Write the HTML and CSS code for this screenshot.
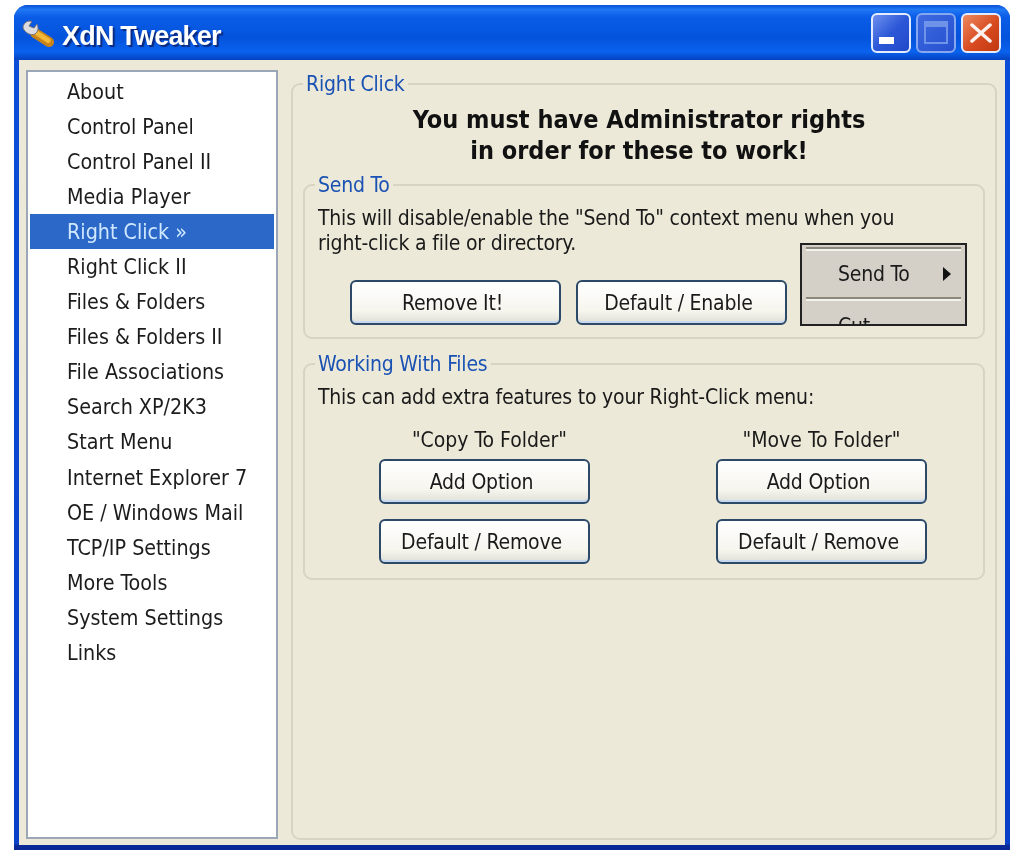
FILE: index.html
```html
<!DOCTYPE html>
<html lang="en">
<head>
<meta charset="utf-8">
<title>XdN Tweaker</title>
<link rel="stylesheet" href="styles.css">
</head>
<body>
<div class="window">
  <header class="titlebar">
    <svg class="app-icon" width="34" height="30" viewBox="0 0 34 30">
      <path d="M15 15 L29 24" stroke="#c88418" stroke-width="10" stroke-linecap="round"/>
      <path d="M16 14.5 L28 22.5" stroke="#f4b838" stroke-width="5" stroke-linecap="round"/>
      <path d="M3 10 C3 6 6 3 10 3 L12 3.500 L9 8 L14 10 L17 6 C19 10 18 14 15 16 C11 18 5 15 3 10Z" fill="#dcdce0" stroke="#70707a" stroke-width="1"/>
    </svg>
    <h1 class="title">XdN Tweaker</h1>
    <div class="controls">
      <div class="ctl ctl-min"><span class="min-bar"></span></div>
      <div class="ctl ctl-max"><span class="max-box"></span></div>
      <div class="ctl ctl-close">
        <svg width="22" height="20" viewBox="0 0 22 20"><path d="M2 2 L20 18 M20 2 L2 18" stroke="#fff" stroke-width="3.500" stroke-linecap="round" opacity=".92"/></svg>
      </div>
    </div>
  </header>
  <div class="client">
    <nav class="side">
      <a class="item">About</a>
      <a class="item">Control Panel</a>
      <a class="item">Control Panel II</a>
      <a class="item">Media Player</a>
      <a class="item active">Right Click »</a>
      <a class="item">Right Click II</a>
      <a class="item">Files &amp; Folders</a>
      <a class="item">Files &amp; Folders II</a>
      <a class="item">File Associations</a>
      <a class="item">Search XP/2K3</a>
      <a class="item">Start Menu</a>
      <a class="item">Internet Explorer 7</a>
      <a class="item">OE / Windows Mail</a>
      <a class="item">TCP/IP Settings</a>
      <a class="item">More Tools</a>
      <a class="item">System Settings</a>
      <a class="item">Links</a>
    </nav>
    <fieldset class="page">
      <legend class="legend">Right Click</legend>
      <p class="warning">You must have Administrator rights<br>in order for these to work!</p>
      <fieldset class="group group-send">
        <legend class="legend">Send To</legend>
        <p class="desc">This will disable/enable the "Send To" context menu when you<br>right-click a file or directory.</p>
        <div class="btn-row">
          <button class="btn">Remove It!</button>
          <button class="btn">Default / Enable</button>
        </div>
        <div class="menu-preview">
          <div class="menu-rule"></div>
          <div class="menu-row"><span>Send To</span><i class="arrow"></i></div>
          <div class="menu-rule"></div>
          <div class="menu-cut">Cut</div>
        </div>
      </fieldset>
      <fieldset class="group group-files">
        <legend class="legend">Working With Files</legend>
        <p class="desc">This can add extra features to your Right-Click menu:</p>
        <div class="cols">
          <div class="col">
            <div class="col-label">"Copy To Folder"</div>
            <button class="btn">Add Option</button>
            <button class="btn">Default / Remove</button>
          </div>
          <div class="col">
            <div class="col-label">"Move To Folder"</div>
            <button class="btn">Add Option</button>
            <button class="btn">Default / Remove</button>
          </div>
        </div>
      </fieldset>
    </fieldset>
  </div>
</div>
</body>
</html>
```
FILE: styles.css
```css
* { box-sizing: border-box; }
html, body { margin: 0; height: 100%; }
body {
  background: #fff;
  padding: 5px 10px 16px 14px;
  font-family: "DejaVu Sans Condensed", "DejaVu Sans", sans-serif;
  font-size: 21px;
  letter-spacing: -0.2px;
  color: #1a1a1a;
}
.window {
  height: 845px;
  display: flex;
  flex-direction: column;
  background: linear-gradient(180deg, #0a4fd8 0%, #0a3fc8 99.300%, #0a2a98 99.400%);
  border-radius: 14px 14px 0 0;
  filter: blur(0.55px);
}
.titlebar {
  height: 55px;
  flex: none;
  display: flex;
  align-items: center;
  padding: 0 9px 0 6px;
  border-radius: 14px 14px 0 0;
  background: linear-gradient(180deg, #0a50d8 0%, #1f78f4 8%, #0a5ce6 22%, #0453dc 60%, #0a62ee 85%, #0342c0 100%);
}
.app-icon { flex: none; }
.title {
  margin: 7px 0 0 8px;
  flex: 1;
  font: bold 27px "Liberation Sans", sans-serif;
  letter-spacing: -0.8px;
  color: #fff;
  text-shadow: 2px 2px 1px #0a2a80;
}
.controls { display: flex; gap: 5px; }
.ctl {
  width: 40px;
  height: 40px;
  border: 2px solid #e4ecff;
  border-radius: 6px;
  display: flex;
  align-items: center;
  justify-content: center;
  background: linear-gradient(135deg, #6e90ee, #2c58d8 50%, #2048c8);
}
.ctl-min { align-items: flex-end; justify-content: flex-start; padding: 0 0 7px 6px; }
.min-bar { width: 15px; height: 7px; background: #fff; }
.ctl-max { border-color: #86a8f0; background: linear-gradient(135deg, #3f6ae0, #2450d0); }
.max-box { width: 24px; height: 23px; border: 2px solid #6f93e8; border-top-width: 6px; }
.ctl-close { background: linear-gradient(135deg, #ee8a60, #d84a20 55%, #c03810); }
.client {
  flex: 1;
  min-height: 0;
  display: flex;
  gap: 13px;
  margin: 0 5px 5px;
  padding: 10px 8px 4px 7px;
  background: #ece9d8;
}
.side {
  width: 252px;
  flex: none;
  display: flex;
  flex-direction: column;
  margin-bottom: 2px;
  padding: 2px 2px;
  background: #fff;
  border: 2px solid #9ba7b7;
}
.item {
  height: 35.05px;
  flex: none;
  padding-left: 37px;
  line-height: 35px;
  font-size: 21.3px;
  letter-spacing: 0;
  color: #1c1c1c;
  white-space: nowrap;
}
.item.active { background: #2c68c8; color: #cfe8ff; }
.page {
  flex: 1;
  min-width: 0;
  margin: 1px 0 1px;
  padding: 0 10px;
  border: 2px solid #d8d4c2;
  border-radius: 9px;
}
.legend {
  padding: 0 3px;
  margin-left: -3px;
  color: #1a52b4;
  line-height: 26px;
}
.page > .legend { margin-left: 0; }
.warning {
  margin: 7px 0 6px;
  padding-right: 10px;
  text-align: center;
  font: bold 25px/31px "DejaVu Sans Condensed", sans-serif;
  letter-spacing: 0;
  color: #111;
}
.group {
  position: relative;
  margin: 0;
  border: 2px solid #d8d4c2;
  border-radius: 9px;
  padding: 0 13px;
}
.group-send { height: 167px; margin-bottom: 12px; }
.group-files { height: 229px; }
.desc { margin: 8px 0 0; line-height: 25px; }
.btn-row { display: flex; gap: 15px; margin: 24px 0 0 32px; }
.btn {
  width: 211px;
  height: 45px;
  padding: 0 6px 0 0;
  font: inherit;
  letter-spacing: inherit;
  color: #1a1a1a;
  border: 2px solid #2c4a68;
  border-radius: 6px;
  background: linear-gradient(180deg, #fff 0%, #f6f5ee 70%, #dfe0d8 100%);
  box-shadow: inset 0 -2px 0 #c8d8ee;
}
.menu-preview {
  position: absolute;
  left: 495px;
  top: 45px;
  width: 167px;
  height: 83px;
  overflow: hidden;
  background: #d4d0c8;
  border: 2px solid #222;
  padding-top: 2px;
}
.menu-rule { height: 4px; margin: 0 4px; border-top: 2px solid #8c887c; border-bottom: 2px solid #f4f2ec; }
.menu-row {
  height: 46px;
  display: flex;
  align-items: center;
  justify-content: space-between;
  padding: 0 14px 0 36px;
}
.arrow {
  width: 0;
  height: 0;
  border-left: 8px solid #111;
  border-top: 7px solid transparent;
  border-bottom: 7px solid transparent;
}
.menu-cut { padding: 12px 0 0 36px; line-height: 26px; }
.cols { display: grid; grid-template-columns: 211px 211px; justify-content: space-between; padding: 0 43px 0 61px; }
.col { display: flex; flex-direction: column; }
.col-label { text-align: center; line-height: 26px; margin: 17px 0 6px; letter-spacing: 0; }
.col:first-child .col-label { padding-left: 10px; }
.col .btn + .btn { margin-top: 15px; }
```
